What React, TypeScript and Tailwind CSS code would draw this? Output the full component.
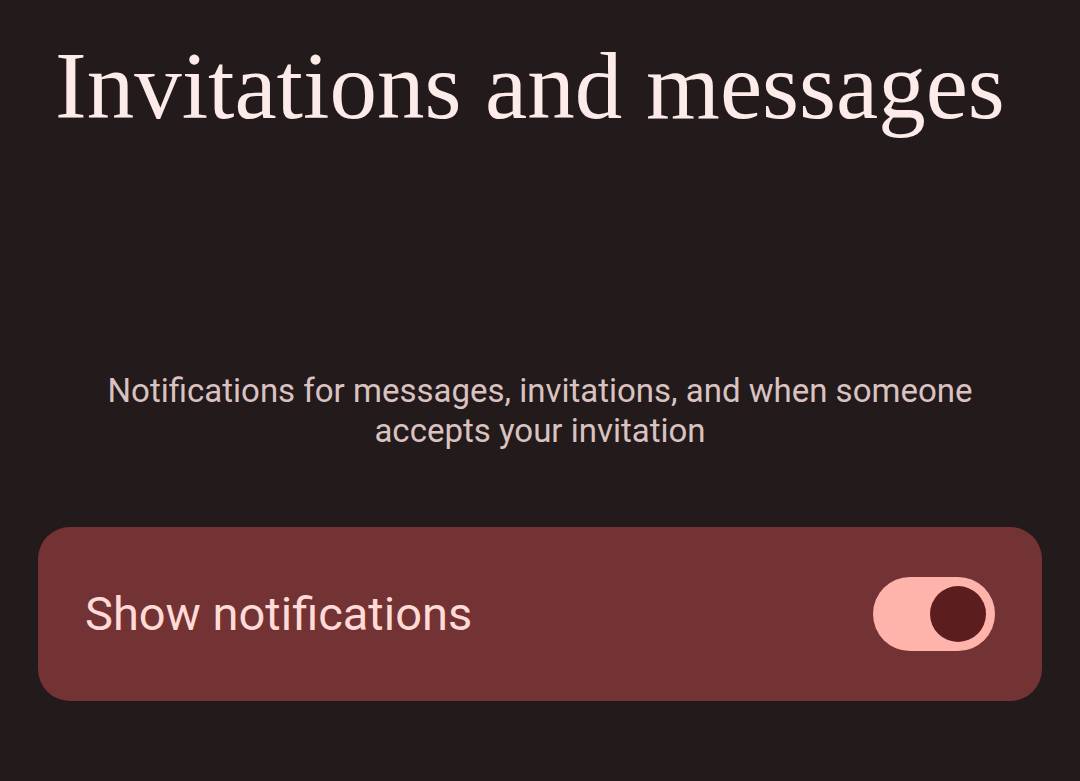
export default function App() {
  return (
    <div className="w-[1080px] h-[781px] bg-[#231a1b] overflow-hidden flex flex-col">
      {/* 标题 */}
      <h1 className="pl-[55px] pt-[31px] text-[95px] leading-[110px] text-[#fcebe9] font-['Liberation_Serif',serif]">
        Invitations and messages
      </h1>

      {/* 说明 */}
      <p className="mt-[230px] px-[60px] text-center text-[33px] leading-[40px] text-[#d9c2c0] font-['Roboto',sans-serif]">
        Notifications for messages, invitations, and when someone
        <br />
        accepts your invitation
      </p>

      {/* 开关卡片 */}
      <div className="mx-[38px] mt-[76px] h-[174px] rounded-[32px] bg-[#733335] flex items-center justify-between pl-[47px] pr-[47px]">
        <span className="text-[47px] leading-[56px] text-[#ffdad6] font-['Roboto',sans-serif]">
          Show notifications
        </span>
        <div className="w-[122px] h-[74px] rounded-full bg-[#ffb4ab] flex items-center justify-end pr-[9px]">
          <div className="w-[56px] h-[56px] rounded-full bg-[#5c1d1f]" />
        </div>
      </div>
    </div>
  )
}
